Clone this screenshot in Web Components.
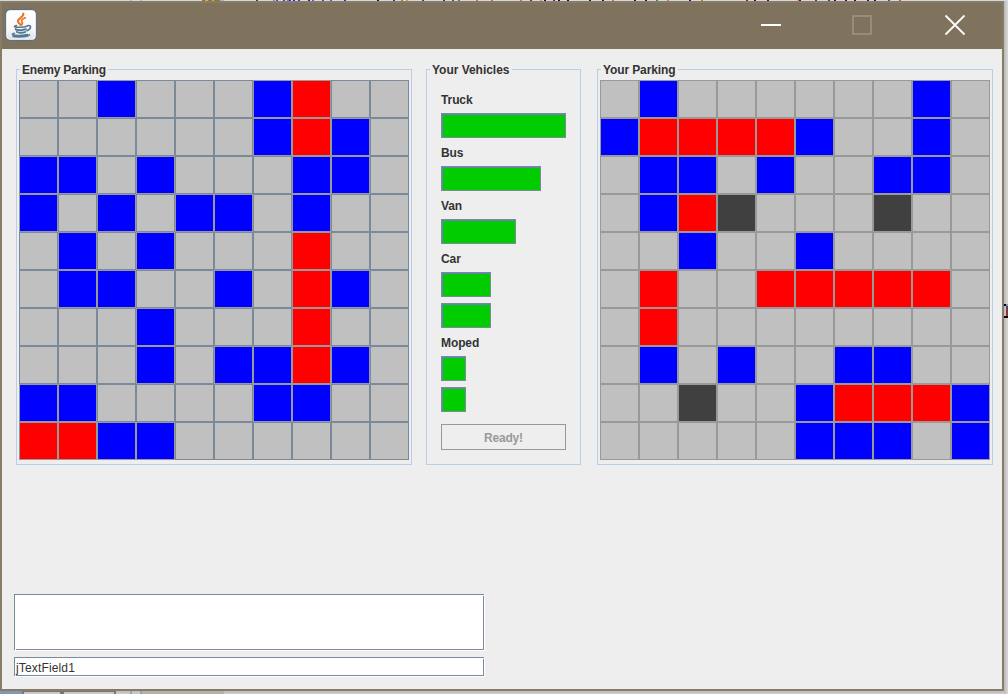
<!DOCTYPE html>
<html lang="en">
<head>
<meta charset="utf-8">
<title>Parking</title>
<style>
html,body{margin:0;height:100%;overflow:hidden;background:#d0d0d0}
body{font:12px "Liberation Sans",Arial,sans-serif;color:#333}
</style>
</head>
<body>
<desktop-view>
  <app-window>
    <title-bar slot="title"></title-bar>
    <main-layout>
      <group-box label="Enemy Parking" text-width="84"><parking-grid enabled rows="..B...BR..,......BRB.,BB.B...BB.,B.B.BB.B..,.B.B...R..,.BB..B.RB.,...B...R..,...B.BBRB.,BB....BB..,RRBB......"></parking-grid></group-box>
      <group-box label="Your Vehicles" text-width="77.5">
        <vehicle-list>
          <vehicle-item label="Truck" size="5"></vehicle-item>
          <vehicle-item label="Bus" size="4"></vehicle-item>
          <vehicle-item label="Van" size="3"></vehicle-item>
          <vehicle-item label="Car" size="2" count="2"></vehicle-item>
          <vehicle-item label="Moped" size="1" count="2"></vehicle-item>
          <ready-button>Ready!</ready-button>
        </vehicle-list>
      </group-box>
      <group-box label="Your Parking" text-width="72.5"><parking-grid rows=".B......B.,BRRRRB..B.,.BB.B..BB.,.BRD...D..,..B..B....,.R..RRRRR.,.R........,.B.B..BB..,..D..BRRRB,.....BBB.B"></parking-grid></group-box>
      <text-box slot="footer" style="height:56px"></text-box>
      <text-box slot="footer" style="height:19px">jTextField1</text-box>
    </main-layout>
  </app-window>
</desktop-view>
<script>
const define = (name, render) => customElements.define(name, class extends HTMLElement {
  connectedCallback() {
    if (!this.shadowRoot) this.attachShadow({mode: 'open'}).innerHTML = render(this);
  }
});

define('desktop-view', () => {
  const dots = [[273,'#a77bc8'],[276,'#4040f0'],[283,'#4040e8'],[287,'#9060d0'],[289,'#3030f0'],[293,'#5010d0'],[298,'#2040f0'],[308,'#3a10d0'],[312,'#8040e0'],[322,'#4040e0'],[330,'#8040e0'],[344,'#3030d0'],[377,'#201030'],[393,'#3030a0'],[401,'#b87838'],[406,'#d09850'],[422,'#404090'],[443,'#303090'],[452,'#883850'],[458,'#308090'],[476,'#b87838'],[491,'#b87838'],[520,'#b87838'],[530,'#782850'],[540,'#d09850'],[544,'#300040'],[553,'#782850'],[558,'#300050'],[567,'#300040'],[589,'#202030'],[602,'#500058'],[612,'#b87838'],[634,'#500058'],[645,'#400060'],[656,'#308090'],[667,'#c08848'],[689,'#500058'],[701,'#b87838'],[746,'#782840'],[754,'#500058'],[767,'#500058'],[797,'#d0a050'],[799,'#500058'],[815,'#782840'],[828,'#304090'],[834,'#500058'],[845,'#500060'],[854,'#500058'],[867,'#202060'],[874,'#500058'],[888,'#2060a0'],[899,'#b06820']];
  return `<style>
    :host{display:block;position:relative;width:1008px;height:694px;overflow:hidden;background:#ccc}
    svg{position:absolute;left:0;top:0}
    .win{position:relative;padding-top:1px}
  </style>
  <svg width="1008" height="694" shape-rendering="crispEdges" aria-hidden="true">
    <defs>
      <linearGradient id="r"><stop offset="0" stop-color="#b8b8b8"/><stop offset="1" stop-color="#dadada"/></linearGradient>
      <linearGradient id="b" x2="0" y2="1"><stop offset="0" stop-color="#bcbcbc"/><stop offset="1" stop-color="#cecece"/></linearGradient>
    </defs>
    <path fill="#d5d9db" d="M0 0h1008v1H0z"/>
    <path fill="#a9b8c8" d="M130 0h2v1h-2zM140 0h2v1h-2zM220 0h4v1h-4z"/>
    <path fill="#927720" d="M202 0h18v1h-18z"/><path fill="#d4b53a" d="M205 0h3v1h-3zM212 0h2v1h-2z"/>
    <path fill="#444" d="M256 0h2v1h-2z"/>
    ${dots.map(([x,c]) => `<path fill="${c}" d="M${x} 0h2v1h-2z"/>`).join('')}
    <path fill="url(#r)" d="M1004 1h4v693h-4z"/>
    <path fill="url(#b)" d="M0 691h1005v3H0z"/>
    <path fill="#8298b0" d="M0 691h22v3H0z"/>
    <path fill="#777" d="M22 691h94v1H22zM22 691h2v3h-2zM60 691h4v3h-4zM114 691h2v3h-2z"/>
    <path fill="#93a3b8" d="M130 691h2v3h-2zM140 691h2v3h-2z"/>
    <path fill="#b3b2a8" d="M142 691h82v3h-82z"/>
    <path fill="#000" d="M1004 304h2v2h-2z"/><path fill="#62a4dc" d="M1006 304h2v2h-2z"/>
    <path fill="#7d3943" d="M1006 306h2v10h-2z"/><path fill="#200008" d="M1004 316h4v2h-4z"/>
  </svg>
  <div class="win"><slot></slot></div>`;
});

define('app-window', () => `<style>
  :host{display:flex;flex-direction:column;box-sizing:border-box;width:1004px;height:690px;border:2px solid #877c68;background:#eee}
  .body{flex:1;min-height:0}
</style><slot name="title"></slot><div class="body"><slot></slot></div>`);

define('title-bar', () => `<style>
  :host{display:flex;align-items:flex-start;justify-content:space-between;height:46px;background:#7f735e}
  svg{display:block;overflow:visible}
  .logo{margin:6px 0 0 3px}
  .controls{display:flex;gap:71px;margin:11px 36px 0 0}
</style>
<svg class="logo" width="33" height="33" viewBox="0 0 33 33">
  <defs><linearGradient id="g" x2="0" y2="1"><stop offset="0" stop-color="#fff"/><stop offset=".6" stop-color="#fafafa"/><stop offset="1" stop-color="#dedfe1"/></linearGradient></defs>
  <rect x=".7" y=".6" width="30.6" height="30.8" rx="4.5" fill="url(#g)" stroke="#54728a" stroke-width="1.2"/>
  <rect x="1.8" y="1.8" width="28.4" height="28.4" rx="3.5" fill="none" stroke="#fff" stroke-opacity=".7"/>
  <g fill="none" stroke="#e97826" stroke-linecap="round">
    <path stroke-width="2.2" d="M18.2 4.7c1.2 3.4-6 4.6-5.2 7.8.3 1.4 1.8 2.2 2.6 3.3"/>
    <path stroke-width="1.8" d="M20.2 8.8c-2.8 1.4-4.3 2.3-3.3 4 .8 1.2.8 2-.3 3"/>
  </g>
  <g fill="none" stroke="#527894" stroke-linecap="round" transform="translate(0 -.5)">
    <path stroke-width="1.6" d="M11.5 17c-4.2 1-1.3 1.9 3.5 1.8 2.8 0 5.5-.4 7.5-1.3M22.5 17.2c4-1.2 4.4 3-.5 5"/>
    <path stroke-width="1.9" d="M10.6 20.5c.7 1.3 7.4 1.5 10.4.2M11.8 23.4c1.3 1.2 6 1.2 8.4.1"/>
    <path stroke-width="1.5" d="M9.3 24.8c-6.4 1.9 4.7 3.1 13 1.2M8 28c5.5.9 14.8.5 16.5-1.7"/>
  </g>
</svg>
<div class="controls">
  <svg width="21" height="22"><path fill="#fff" d="M0 10h20v2H0z"/></svg>
  <svg width="21" height="22"><rect x="0" y="2" width="18" height="18" fill="none" stroke="#978b79" stroke-width="2"/></svg>
  <svg width="21" height="22"><path d="M.5 1.5 19.5 20.5M19.5 1.5.5 20.5" stroke="#fff" stroke-width="1.8"/></svg>
</div>`);

define('main-layout', () => `<style>
  :host{display:flex;flex-direction:column;justify-content:space-between;box-sizing:border-box;height:640px;padding:20px 9px 13px 14px}
  .boards{display:grid;grid-template-columns:396px 155px 396px;column-gap:14px;height:396px;justify-content:space-between}
  .footer{display:flex;flex-direction:column;gap:7px;width:470px;margin-left:-2px}
  ::slotted(group-box:nth-of-type(2)){margin-left:-1px;margin-right:1px}
</style>
<div class="boards"><slot></slot></div><div class="footer"><slot name="footer"></slot></div>`);

define('group-box', el => `<style>
  :host{display:block;box-sizing:border-box;position:relative;height:396px;border:1px solid #b8cfe5;padding:10px 2px 0}
  svg{position:absolute;left:3px;top:-8px;overflow:visible;background:#eee}
  text{font:bold 12px "Liberation Sans",Arial,sans-serif;fill:#333}
</style>
<svg width="${Math.ceil(+el.getAttribute('text-width')) + 4}" height="15"><text x="2" y="12" textLength="${el.getAttribute('text-width')}">${el.getAttribute('label')}</text></svg>
<slot></slot>`);

define('parking-grid', el => {
  const names = {B: 'water', R: 'hit', D: 'dark'};
  return `<style>
    :host{display:grid;grid-template-columns:repeat(10,39px);grid-auto-rows:38px}
    i{box-sizing:border-box;border:1px solid #999;background:#c0c0c0}
    .on{border-color:#7a8a99}
    .water{background:#00f}.hit{background:#f00}.dark{background:#404040}
  </style>` + [...el.getAttribute('rows').replace(/,/g, '')].map(c =>
    `<i class="${names[c] || (el.hasAttribute('enabled') ? 'on' : '')}"></i>`).join('');
});

define('vehicle-list', () => `<style>
  :host{display:flex;flex-direction:column;gap:7px;padding:12px 12px 0}
  ::slotted(ready-button){margin-top:5px}
</style><slot></slot>`);

define('vehicle-item', el => `<style>
  :host{display:flex;flex-direction:column;gap:6px}
  span{box-sizing:border-box;font-weight:bold;height:15px;line-height:15px;padding-top:1px;letter-spacing:-.1px}
  i{box-sizing:border-box;width:${el.getAttribute('size') * 25}px;height:25px;border:1px solid #7a8a99;background:#00cc00;box-shadow:inset 1px 1px #6382bf}
</style><span>${el.getAttribute('label')}</span>${'<i></i>'.repeat(+el.getAttribute('count') || 1)}`);

define('ready-button', () => `<style>
  :host{display:flex;box-sizing:border-box;height:26px;border:1px solid #999;padding-top:2px;color:#999;font-weight:bold;letter-spacing:-.2px;align-items:center;justify-content:center}
</style><slot></slot>`);

define('text-box', () => `<style>
  :host{display:block;position:relative;box-sizing:border-box;border:1px solid #7a8a99;background:#fff;box-shadow:1px 1px #fff;padding:1px 0 0 1px;line-height:19px;letter-spacing:.15px}
  :host::before,:host::after{content:"";position:absolute;width:1px;height:1px;background:#fff}
  :host::before{right:-1px;top:0}
  :host::after{left:0;bottom:-1px}
</style><slot></slot>`);
</script>
</body>
</html>
